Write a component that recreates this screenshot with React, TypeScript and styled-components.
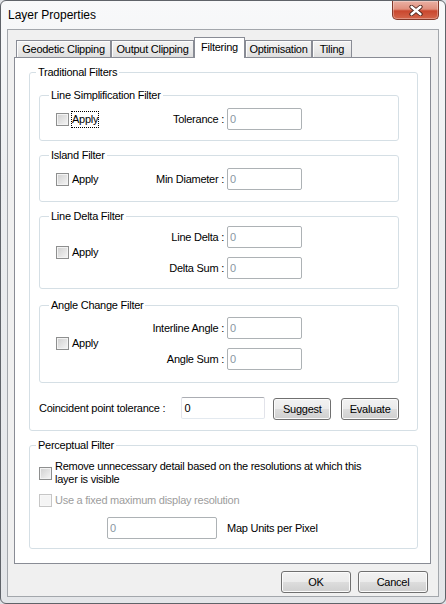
import React from "react";
import styled, { createGlobalStyle, css } from "styled-components";

const GlobalStyle = createGlobalStyle`
    html, body {
        margin: 0;
        padding: 0;
        background: #dfe2e6;
    }
    body {
        font-family: "Liberation Sans", Arial, sans-serif;
        font-size: 11px;
        letter-spacing: -0.25px;
        color: #000;
    }
`;

type Tab = { title: string; width: number };

const tabs: Tab[] = [
    { title: "Geodetic Clipping", width: 95 },
    { title: "Output Clipping", width: 83 },
    { title: "Filtering", width: 51 },
    { title: "Optimisation", width: 67 },
    { title: "Tiling", width: 40 },
];

const CloseGlyph = () => (
    <svg width="14" height="11" viewBox="0 0 14 11">
        <path
            d="M2.5 1.8 L11.5 9.2 M11.5 1.8 L2.5 9.2"
            stroke="#4a2219"
            strokeWidth="4.2"
            strokeLinecap="round"
        />
        <path
            d="M2.5 1.8 L11.5 9.2 M11.5 1.8 L2.5 9.2"
            stroke="#ffffff"
            strokeWidth="2.4"
            strokeLinecap="round"
        />
    </svg>
);

type FilterField = { label: string; value: string };

type FilterGroupProps = {
    title: string;
    fields: FilterField[];
    focused?: boolean;
    mt: number;
    pt: number;
    pb: number;
};

const FilterGroup = (props: FilterGroupProps) => {
    const { title, fields, focused, mt, pt, pb } = props;
    return (
        <Group $mt={mt}>
            <Legend $indent={9}>{title}</Legend>
            <GroupBody $pt={pt} $pb={pb} $pl={16} $pr={0}>
                <FilterGrid>
                    <ApplyCell style={{ gridRow: `1 / ${fields.length + 1}` }}>
                        <CheckBox />
                        <ApplyText $focused={!!focused}>Apply</ApplyText>
                    </ApplyCell>
                    {fields.map((field) => (
                        <React.Fragment key={field.label}>
                            <FieldLabel>{field.label} :</FieldLabel>
                            <TextField
                                $width={75}
                                disabled
                                defaultValue={field.value}
                            />
                        </React.Fragment>
                    ))}
                </FilterGrid>
            </GroupBody>
        </Group>
    );
};

export default function App() {
    return (
        <>
            <GlobalStyle />
            <Window>
                <TitleBar>
                    <Title>Layer Properties</Title>
                    <CloseButton>
                        <CloseGlyph />
                    </CloseButton>
                </TitleBar>
                <Client>
                    <TabControl>
                        <TabStrip>
                            {tabs.map((tab) => (
                                <TabItem
                                    key={tab.title}
                                    $width={tab.width}
                                    $active={tab.title === "Filtering"}
                                >
                                    {tab.title}
                                </TabItem>
                            ))}
                        </TabStrip>
                        <TabPanel>
                            <Group $mt={0}>
                                <Legend $indent={6}>Traditional Filters</Legend>
                                <GroupBody $pt={10} $pb={10} $pl={9} $pr={18}>
                                    <FilterGroup
                                        title="Line Simplification Filter"
                                        fields={[{ label: "Tolerance", value: "0" }]}
                                        focused
                                        mt={0}
                                        pt={6}
                                        pb={10}
                                    />
                                    <FilterGroup
                                        title="Island Filter"
                                        fields={[{ label: "Min Diameter", value: "0" }]}
                                        mt={8}
                                        pt={6}
                                        pb={11}
                                    />
                                    <FilterGroup
                                        title="Line Delta Filter"
                                        fields={[
                                            { label: "Line Delta", value: "0" },
                                            { label: "Delta Sum", value: "0" },
                                        ]}
                                        mt={8}
                                        pt={3}
                                        pb={9}
                                    />
                                    <FilterGroup
                                        title="Angle Change Filter"
                                        fields={[
                                            { label: "Interline Angle", value: "0" },
                                            { label: "Angle Sum", value: "0" },
                                        ]}
                                        mt={10}
                                        pt={5}
                                        pb={12}
                                    />
                                    <ToleranceRow>
                                        <ToleranceLabel>Coincident point tolerance :</ToleranceLabel>
                                        <TextField $width={84} defaultValue="0" readOnly />
                                        <PushButton $width={58} $ml={8}>
                                            Suggest
                                        </PushButton>
                                        <PushButton $width={58} $ml={10}>
                                            Evaluate
                                        </PushButton>
                                    </ToleranceRow>
                                </GroupBody>
                            </Group>

                            <Group $mt={8}>
                                <Legend $indent={6}>Perceptual Filter</Legend>
                                <GroupBody $pt={8} $pb={9} $pl={9} $pr={0}>
                                    <CheckRow>
                                        <CheckBox />
                                        <CheckText>
                                            Remove unnecessary detail based on the resolutions at which this
                                            <br />
                                            layer is visible
                                        </CheckText>
                                    </CheckRow>
                                    <CheckRow $mt={8}>
                                        <CheckBox $disabled />
                                        <CheckText $disabled>
                                            Use a fixed maximum display resolution
                                        </CheckText>
                                    </CheckRow>
                                    <ResolutionRow>
                                        <TextField $width={110} disabled defaultValue="0" />
                                        <UnitsLabel>Map Units per Pixel</UnitsLabel>
                                    </ResolutionRow>
                                </GroupBody>
                            </Group>
                        </TabPanel>
                    </TabControl>
                    <DialogButtons>
                        <PushButton $width={70} $ml={0}>
                            OK
                        </PushButton>
                        <PushButton $width={70} $ml={0}>
                            Cancel
                        </PushButton>
                    </DialogButtons>
                </Client>
            </Window>
        </>
    );
}

const Window = styled.div`
    width: 446px;
    height: 604px;
    box-sizing: border-box;
    border: 1px solid #5f6369;
    border-radius: 6px;
    background: linear-gradient(
        180deg,
        #f8f9fa 0%,
        #eceef0 30%,
        #e4e6e9 100%
    );
    display: flex;
    flex-direction: column;
    padding: 0 6px 6px 6px;
    overflow: hidden;
`;

const TitleBar = styled.div`
    height: 28px;
    display: flex;
    align-items: center;
    padding-left: 1px;
`;

const Title = styled.div`
    font-size: 12px;
    letter-spacing: 0;
    line-height: 14px;
    padding-bottom: 1px;
`;

const CloseButton = styled.div`
    align-self: flex-start;
    margin-left: auto;
    width: 47px;
    height: 19px;
    box-sizing: border-box;
    border: 1px solid #83392a;
    border-top: none;
    border-radius: 0 0 5px 5px;
    background: linear-gradient(
        180deg,
        #eab1a4 0%,
        #e08f7d 45%,
        #c9472e 55%,
        #d4664b 100%
    );
    box-shadow: inset 0 0 0 1px rgba(255, 255, 255, 0.3);
    display: flex;
    align-items: center;
    justify-content: center;
`;

const Client = styled.div`
    flex: 1;
    box-sizing: border-box;
    border: 1px solid #a3a7ac;
    background: #f0f0f0;
    display: flex;
    flex-direction: column;
    padding: 7px 7px 0 6px;
`;

const TabControl = styled.div`
    width: 417px;
    display: flex;
    flex-direction: column;
`;

const TabStrip = styled.div`
    height: 20px;
    display: flex;
    align-items: flex-end;
    padding-left: 2px;
`;

const TabItem = styled.div<{ $width: number; $active: boolean }>`
    width: ${(props) => props.$width}px;
    box-sizing: border-box;
    border: 1px solid #898c95;
    border-bottom: none;
    display: flex;
    align-items: center;
    justify-content: center;
    white-space: nowrap;
    ${(props) =>
        props.$active
            ? css`
                  height: 21px;
                  margin-bottom: -1px;
                  background: #ffffff;
                  padding-bottom: 2px;
                  position: relative;
                  z-index: 1;
              `
            : css`
                  height: 17px;
                  background: linear-gradient(180deg, #f3f3f3 0%, #ebebeb 50%, #dedede 100%);
                  box-shadow: inset 1px 1px 0 #fcfcfc;
              `}
`;

const TabPanel = styled.div`
    height: 507px;
    box-sizing: border-box;
    border: 1px solid #898c95;
    background: #ffffff;
    padding: 8px 12px 0 14px;
`;

const Group = styled.fieldset<{ $mt: number }>`
    margin: ${(props) => props.$mt}px 0 0 0;
    padding: 0;
    border: 1px solid #d5dfe5;
    border-radius: 3px;
    min-width: 0;
`;

const Legend = styled.legend<{ $indent: number }>`
    margin-left: ${(props) => props.$indent}px;
    padding: 0 2px;
    line-height: 13px;
    font-size: 11px;
`;

const GroupBody = styled.div<{ $pt: number; $pb: number; $pl: number; $pr: number }>`
    padding: ${(p) => `${p.$pt}px ${p.$pr}px ${p.$pb}px ${p.$pl}px`};
    display: flex;
    flex-direction: column;
`;

const FilterGrid = styled.div`
    display: grid;
    grid-template-columns: 74px 94px 78px;
    row-gap: 9px;
    align-items: center;
`;

const ApplyCell = styled.div`
    grid-column: 1;
    display: flex;
    align-items: center;
    align-self: center;
`;

const CheckBox = styled.span<{ $disabled?: boolean }>`
    flex: none;
    width: 13px;
    height: 13px;
    box-sizing: border-box;
    border: 1px solid ${(p) => (p.$disabled ? "#c6c6c6" : "#8e8f8f")};
    background: ${(p) =>
        p.$disabled
            ? "#f4f4f4"
            : "linear-gradient(135deg, #cfcfcf 0%, #e4e4e4 55%, #f6f6f6 100%)"};
    box-shadow: inset 0 0 0 1px ${(p) => (p.$disabled ? "#f7f7f7" : "#f3f3f3")};
`;

const ApplyText = styled.span<{ $focused: boolean }>`
    margin-left: 2px;
    line-height: 15px;
    border: 1px dotted ${(p) => (p.$focused ? "#000" : "transparent")};
`;

const FieldLabel = styled.div`
    grid-column: 2;
    text-align: right;
    white-space: nowrap;
`;

const TextField = styled.input<{ $width: number }>`
    grid-column: 3;
    width: ${(p) => p.$width}px;
    height: 22px;
    box-sizing: border-box;
    margin: 0 0 0 3px;
    padding: 0 0 1px 2px;
    font-family: inherit;
    font-size: 11px;
    letter-spacing: -0.25px;
    border-radius: 2px;
    outline: none;
    background: #ffffff;
    color: #000;
    border: 1px solid;
    border-color: #abadb3 #e2e3ea #e3e9ef #e2e3ea;
    &:disabled {
        border-color: #adb2b5;
        color: #8a96a3;
        background: #ffffff;
    }
`;

const ToleranceRow = styled.div`
    margin-top: 14px;
    display: flex;
    align-items: flex-start;
    height: 23px;
    & > input {
        margin-left: 0;
    }
`;

const ToleranceLabel = styled.div`
    width: 143px;
    line-height: 22px;
    white-space: nowrap;
`;

const PushButton = styled.div<{ $width: number; $ml: number }>`
    width: ${(p) => p.$width}px;
    height: 22px;
    margin-left: ${(p) => p.$ml}px;
    margin-top: 1px;
    box-sizing: border-box;
    border: 1px solid #707070;
    border-radius: 3px;
    background: linear-gradient(180deg, #f2f2f2 0%, #ebebeb 50%, #dddddd 50%, #cfcfcf 100%);
    box-shadow: inset 0 0 0 1px #fbfbfb;
    display: flex;
    align-items: center;
    justify-content: center;
`;

const CheckRow = styled.div<{ $mt?: number }>`
    margin-top: ${(p) => p.$mt ?? 0}px;
    display: flex;
    align-items: center;
`;

const CheckText = styled.div<{ $disabled?: boolean }>`
    margin-left: 3px;
    line-height: 13px;
    color: ${(p) => (p.$disabled ? "#9d9d9d" : "#000")};
    white-space: nowrap;
`;

const ResolutionRow = styled.div`
    margin-top: 10px;
    padding-left: 65px;
    display: flex;
    align-items: center;
`;

const UnitsLabel = styled.div`
    margin-left: 10px;
`;

const DialogButtons = styled.div`
    margin-top: 7px;
    padding-right: 3px;
    display: flex;
    justify-content: flex-end;
    gap: 7px;
    & > div {
        margin-top: 0;
    }
`;
